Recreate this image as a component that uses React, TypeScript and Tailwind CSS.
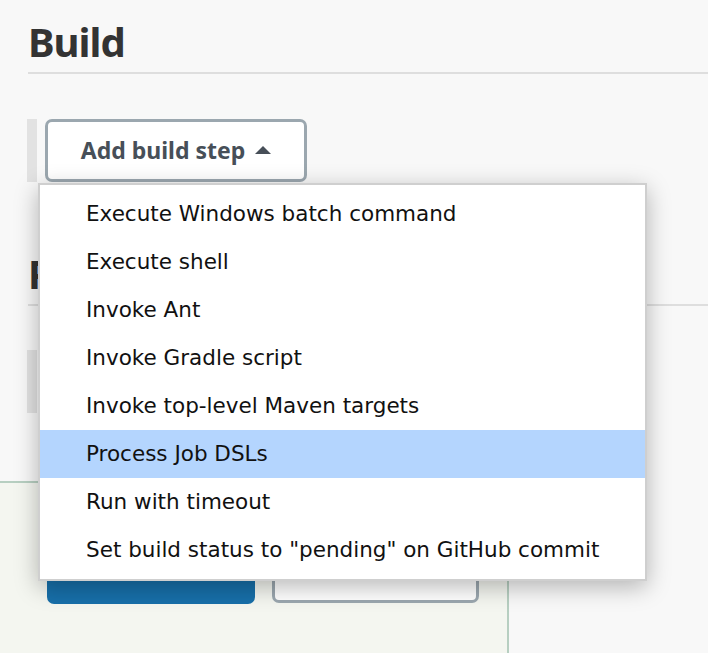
import { useState } from 'react';

const steps = [
  'Execute Windows batch command',
  'Execute shell',
  'Invoke Ant',
  'Invoke Gradle script',
  'Invoke top-level Maven targets',
  'Process Job DSLs',
  'Run with timeout',
  'Set build status to "pending" on GitHub commit',
];

const Caret = () => (
  <svg width="16" height="8" viewBox="0 0 16 8" className="ml-[10px] mt-[-2px]">
    <path d="M8 0 L16 8 L0 8 Z" fill="currentColor" />
  </svg>
);

export default function App() {
  const [active, setActive] = useState(5);

  return (
    <div className="h-[653px] overflow-hidden bg-[#f8f8f8] font-['Noto_Sans','Open_Sans',sans-serif] flex flex-col">
      <div className="pl-[28px]">
        <h2 className="h-[74px] pt-[18px] border-b-2 border-[#dedede] text-[40px] leading-[48px] font-bold tracking-[-1px] text-[#333]">
          Build
        </h2>

        <div className="mt-[45px] flex h-[63px] ml-[-1px]">
          <div className="w-[10px] bg-[#e2e2e2]" />
          <div className="relative ml-[8px]">
            <button className="h-[63px] w-[262px] rounded-[7px] border-[3px] border-[#9ba7af] bg-white flex items-center justify-center text-[23px] font-bold text-[#474f58]">
              Add build step
              <Caret />
            </button>

            <div className="absolute z-10 left-[-7px] top-[64px] w-[609px] border-2 border-[#cfcfcf] bg-white py-[5px] shadow-[0_6px_22px_rgba(0,0,0,0.28)] font-['DejaVu_Sans',sans-serif]">
              {steps.map((s, i) => (
                <div
                  key={s}
                  onMouseEnter={() => setActive(i)}
                  className={
                    'h-[48px] pl-[46px] flex items-center text-[21.5px] text-[#111] ' +
                    (i === active ? 'bg-[#b4d5fe]' : '')
                  }
                >
                  {s}
                </div>
              ))}
            </div>
          </div>
        </div>

        <h2 className="mt-[62px] h-[62px] pt-[6px] border-b-2 border-[#dedede] text-[40px] leading-[48px] font-bold tracking-[-1px] text-[#333]">
          Post-build Actions
        </h2>

        <div className="mt-[44px] flex h-[63px] ml-[-1px]">
          <div className="w-[10px] bg-[#e2e2e2]" />
          <button className="ml-[8px] h-[63px] w-[300px] rounded-[7px] border-[3px] border-[#9ba7af] bg-white flex items-center justify-center text-[23px] font-bold text-[#474f58]">
            Add post-build action
            <Caret />
          </button>
        </div>
      </div>

      <div className="mt-[68px] w-[509px] flex-1 border-t-2 border-r-2 border-[#b7cfc1] bg-[#f4f6f0] pt-[37px] pl-[47px] flex gap-[17px] items-start">
        <button className="h-[84px] w-[208px] rounded-[7px] bg-[#176fa9] text-white text-[22px] font-bold pb-[20px]">
          Save
        </button>
        <button className="h-[83px] w-[207px] rounded-[7px] border-[3px] border-[#9ba7af] bg-white text-[22px] font-bold text-[#474f58] pb-[20px]">
          Apply
        </button>
      </div>
    </div>
  );
}
